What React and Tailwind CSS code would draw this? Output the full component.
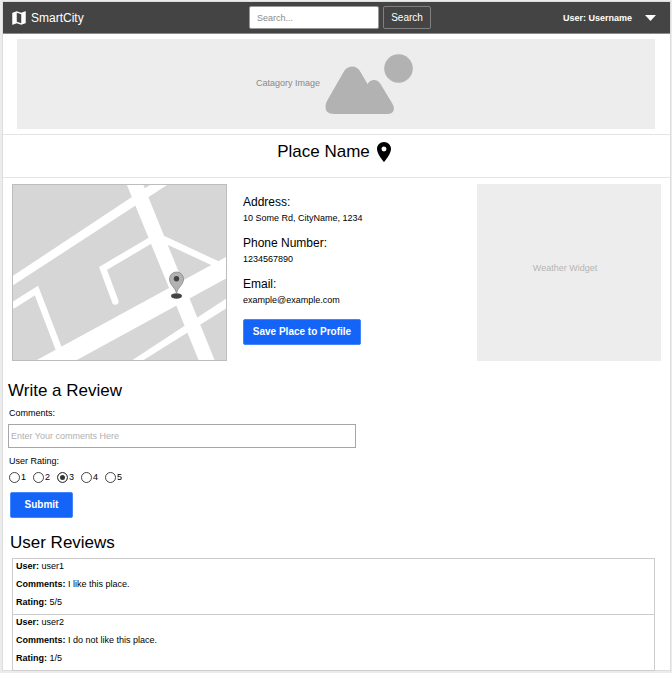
import React from "react";
import { MdMap, MdPlace } from "react-icons/md";

const details = [
  { label: "Address:", value: "10 Some Rd, CityName, 1234" },
  { label: "Phone Number:", value: "1234567890" },
  { label: "Email:", value: "example@example.com" },
];

const reviews = [
  { user: "user1", comments: "I like this place.", rating: "5/5" },
  { user: "user2", comments: "I do not like this place.", rating: "1/5" },
];

function Header() {
  return (
    <header className="grid h-8 grid-cols-[1fr_auto_1fr] items-center border-b border-[#8a8a8a] bg-[#444444] pl-[7px] text-white">
      <a href="#home" className="flex items-center gap-[3px] text-[12px] leading-4">
        <MdMap size={18} aria-hidden="true" />
        SmartCity
      </a>
      <form className="flex items-center gap-1" onSubmit={(e) => e.preventDefault()}>
        <input
          type="search"
          aria-label="Search"
          placeholder="Search..."
          className="h-[23px] w-[130px] rounded-[2px] border border-[#999999] bg-white px-[7px] text-[9px] text-black outline-none placeholder:text-[#8a8a8a]"
        />
        <button
          type="submit"
          className="h-[23px] w-12 rounded-[2px] border border-[#808080] text-[10px] leading-none"
        >
          Search
        </button>
      </form>
      <button type="button" className="flex items-center gap-[13px] justify-self-end pr-[14px] text-[9px] font-bold leading-3">
        User: Username
        <svg width="11" height="6" viewBox="0 0 11 6" aria-hidden="true">
          <path d="M0 0H11L5.500 6Z" fill="#fff" />
        </svg>
      </button>
    </header>
  );
}

function CategoryBanner() {
  return (
    <section className="border-b border-[#e4e4e4] py-[5px] pl-[14px] pr-[15px]">
      <div className="flex h-[90px] items-center justify-center gap-[5px] bg-[#ededed] pr-[3px] text-[9px] text-[#888888]">
        Catagory Image
        <svg width="88" height="60" viewBox="0 0 88 60" fill="#b2b2b2" aria-hidden="true">
          <circle cx="73.500" cy="14.500" r="14.300" />
          <path d="M9 60Q0 60 .5 52Q.7 49 2 47L18 19Q21 12.500 27 12.500Q32.500 12.500 35.500 18L42.500 30Q45 26 49 26Q53 26 55.500 30L67 49Q69 52 69 55Q68.500 60 62 60Z" />
        </svg>
      </div>
    </section>
  );
}

function PlaceMap() {
  return (
    <svg
      className="h-[177px] w-full border border-[#bdbdbd] bg-[#d6d6d6]"
      viewBox="1 1 213 175"
      preserveAspectRatio="xMidYMid slice"
      role="img"
      aria-label="Map"
    >
      <g fill="#fff">
        <path d="M0 92.500L138 1H155L0 102Z" />
        <path d="M114.500 0H131L203 177H187Z" />
        <path d="M23 177L215 72.500V94L63 177Z" />
        <path d="M119 177L215 114V124L130 177Z" />
      </g>
      <g fill="none" stroke="#fff" strokeWidth="6.500">
        <path d="M140 55.500L91 84.500L103.300 117.500" />
        <path d="M151 55L208 81.500" />
        <path d="M0 122L24.500 106.500L48 168" />
      </g>
      <circle cx="103.300" cy="117.500" r="3.200" fill="#fff" />
      <ellipse cx="164.500" cy="112" rx="5.500" ry="2.700" fill="#444" />
      <path
        d="M164.500 109.500C163.500 103.500 157.500 101 157.500 95A7 7 0 0 1 171.500 95C171.500 101 165.500 103.500 164.500 109.500Z"
        fill="#b2b2b2"
        stroke="#888"
        strokeWidth=".8"
      />
      <circle cx="164.500" cy="94.700" r="2.700" fill="#444" />
    </svg>
  );
}

function PlaceDetails() {
  return (
    <div className="pt-[10px]">
      <dl className="space-y-[9px]">
        {details.map((d) => (
          <div key={d.label}>
            <dt className="text-[12px] leading-4">{d.label}</dt>
            <dd className="text-[9px] leading-4">{d.value}</dd>
          </div>
        ))}
      </dl>
      <button
        type="button"
        className="mt-[11px] block h-[26px] w-[118px] rounded-[2px] border border-[#4285ff] bg-[#1464f8] text-[10px] font-bold leading-none text-white"
      >
        Save Place to Profile
      </button>
    </div>
  );
}

function ReviewForm() {
  return (
    <form className="px-[5px]" onSubmit={(e) => e.preventDefault()}>
      <h2 className="text-[17px] leading-5">Write a Review</h2>
      <label htmlFor="comments" className="mt-[6px] block pl-px text-[9px] leading-3">
        Comments:
      </label>
      <input
        id="comments"
        type="text"
        placeholder="Enter Your comments Here"
        className="mt-[5px] block h-6 w-full max-w-[348px] border border-[#a6a6a6] px-[2px] text-[9px] outline-none placeholder:text-[#b0b0b0]"
      />
      <fieldset className="mt-[7px]">
        <legend className="pl-px text-[9px] leading-3">User Rating:</legend>
        <div className="mt-1 flex gap-[7px] pl-px">
          {[1, 2, 3, 4, 5].map((n) => (
            <label key={n} className="flex h-3 items-center gap-px text-[9px] leading-3">
              <input
                type="radio"
                name="rating"
                value={n}
                defaultChecked={n === 3}
                className="size-[11px] appearance-none rounded-full border border-[#444444] bg-white checked:bg-[#333333] checked:shadow-[inset_0_0_0_2px_white]"
              />
              {n}
            </label>
          ))}
        </div>
      </fieldset>
      <button
        type="submit"
        className="ml-[2px] mt-[9px] block h-[26px] w-[63px] rounded-[2px] border border-[#4285ff] bg-[#1464f8] text-[10px] font-bold leading-none text-white"
      >
        Submit
      </button>
    </form>
  );
}

function Reviews() {
  return (
    <section className="-mb-px mt-[15px] pl-[7px] pr-[15px]">
      <h2 className="text-[17px] leading-5">User Reviews</h2>
      <ul className="ml-[2px] mt-[5px] divide-y divide-[#cccccc] border border-[#cccccc]">
        {reviews.map((r) => (
          <li key={r.user} className="flex flex-col gap-[6px] pb-[6px] pl-[3px] pt-px text-[9px] leading-3">
            <p><b>User:</b> {r.user}</p>
            <p><b>Comments:</b> {r.comments}</p>
            <p><b>Rating:</b> {r.rating}</p>
          </li>
        ))}
      </ul>
    </section>
  );
}

export default function App() {
  return (
    <div className="min-h-screen bg-[#ececec] pb-[2px] pl-[2px] pr-px pt-px font-['Liberation_Sans',Arial,sans-serif] text-black">
      <div className="border border-[#dddddd] bg-white">
        <Header />
        <main>
          <CategoryBanner />
          <div className="flex h-[43px] items-start justify-center gap-[2px] border-b border-[#e4e4e4] pt-[5px]">
            <h1 className="text-[17px] leading-6">Place Name</h1>
            <MdPlace size={24} aria-hidden="true" />
          </div>
          <section className="grid grid-cols-[215fr_218fr_184fr] gap-x-4 px-[9px] pt-[6px]">
            <PlaceMap />
            <PlaceDetails />
            <aside className="flex h-[177px] items-center justify-center bg-[#ededed] pb-2 pr-2 text-[9px] text-[#b5b5b5]">
              Weather Widget
            </aside>
          </section>
          <div className="pt-5">
            <ReviewForm />
          </div>
          <Reviews />
        </main>
      </div>
    </div>
  );
}
